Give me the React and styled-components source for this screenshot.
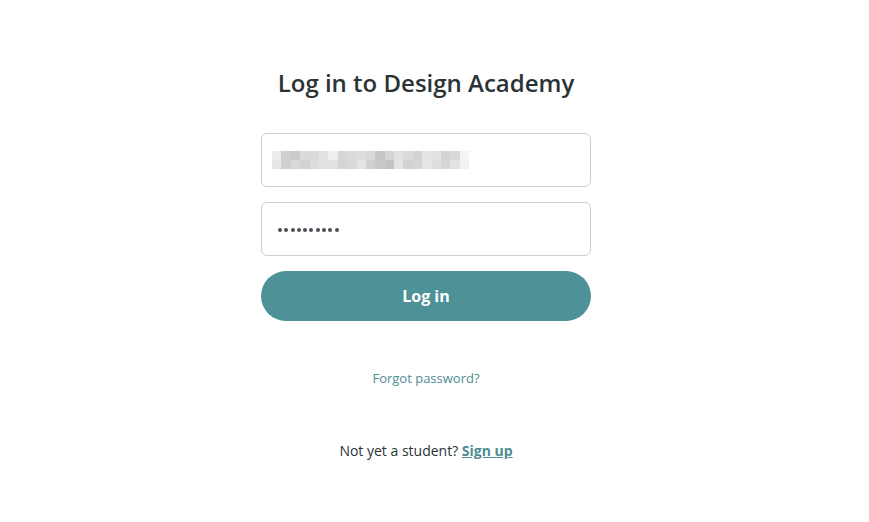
import React from "react";
import styled, { createGlobalStyle } from "styled-components";

const GlobalStyle = createGlobalStyle`
  body {
    margin: 0;
    background: #fff;
    font-family: "Open Sans", "Liberation Sans", sans-serif;
  }
`;

// pixelated (blurred) email value, two rows of grey cells
const blurRows = [
  ["#ececec", "#d0d0d0", "#cbcbcb", "#dadada", "#dadada", "#e2e2e2", "#eef0ef", "#d6d6d6", "#dadada", "#dcdcdc", "#d9d9d9", "#c6c6c6", "#d4d4d4", "#e2e2e2", "#dadada", "#d2d2d2", "#e4e4e4", "#e2e2e2", "#d3d3d3", "#d9d9d9", "#f4f4f4"],
  ["#e6e6e6", "#cfcfcf", "#d8d8d8", "#d2d2d2", "#dddddd", "#e2e2e2", "#e2e2e2", "#d4d4d4", "#d8d8d8", "#e4e4e4", "#d0d0d0", "#c9c9c9", "#c3c3c3", "#e3e3e3", "#d2d2d2", "#d6d6d6", "#e6e6e6", "#dedede", "#d6d6d6", "#e2e2e2", "#f2f2f2"],
];

function App() {
  return (
    <>
      <GlobalStyle />
      <Page>
        <Title>Log in to Design Academy</Title>
        <Form>
          <Field>
            <Blur>
              {blurRows.map((row, i) => (
                <BlurRow key={i}>
                  {row.map((c, j) => (
                    <Cell key={j} style={{ background: c }} />
                  ))}
                </BlurRow>
              ))}
            </Blur>
          </Field>
          <Field>
            <Dots>
              {Array.from({ length: 10 }).map((_, i) => (
                <Dot key={i} />
              ))}
            </Dots>
          </Field>
          <Button>Log in</Button>
        </Form>
        <Forgot href="#">Forgot password?</Forgot>
        <Signup>
          Not yet a student? <a href="#">Sign up</a>
        </Signup>
      </Page>
    </>
  );
}

export default App;

const Page = styled.div`
  width: 852px;
  display: flex;
  flex-direction: column;
  align-items: center;
  padding-top: 66px;
`;

const Title = styled.h1`
  margin: 0;
  font-size: 24px;
  line-height: 34px;
  font-weight: 600;
  color: #2c3336;
  letter-spacing: 0;
`;

const Form = styled.div`
  width: 330px;
  display: flex;
  flex-direction: column;
  gap: 15px;
  margin-top: 33px;
`;

const Field = styled.div`
  box-sizing: border-box;
  height: 54px;
  border: 1px solid #cfcfcf;
  border-radius: 6px;
  display: flex;
  align-items: center;
  padding: 0 16px;
`;

const Blur = styled.div`
  display: flex;
  flex-direction: column;
  margin-left: -6px;
`;

const BlurRow = styled.div`
  display: flex;
`;

const Cell = styled.div`
  width: 9.4px;
  height: 9px;
`;

const Dots = styled.div`
  display: flex;
  gap: 2.3px;
  margin-top: 1px;
`;

const Dot = styled.span`
  width: 4px;
  height: 4px;
  border-radius: 50%;
  background: #4b4f56;
`;

const Button = styled.button`
  height: 50px;
  border: none;
  border-radius: 25px;
  background: #4e9197;
  color: #fff;
  font-family: "Open Sans", "Liberation Sans", sans-serif;
  font-size: 16px;
  font-weight: 700;
  cursor: pointer;
`;

const Forgot = styled.a`
  margin-top: 47px;
  font-size: 13px;
  line-height: 20px;
  color: #4e8c93;
  text-decoration: none;
`;

const Signup = styled.p`
  margin: 53px 0 0;
  font-size: 14px;
  line-height: 20px;
  color: #2c3336;

  a {
    color: #4e8c93;
    font-weight: 700;
    text-decoration: underline;
  }
`;
